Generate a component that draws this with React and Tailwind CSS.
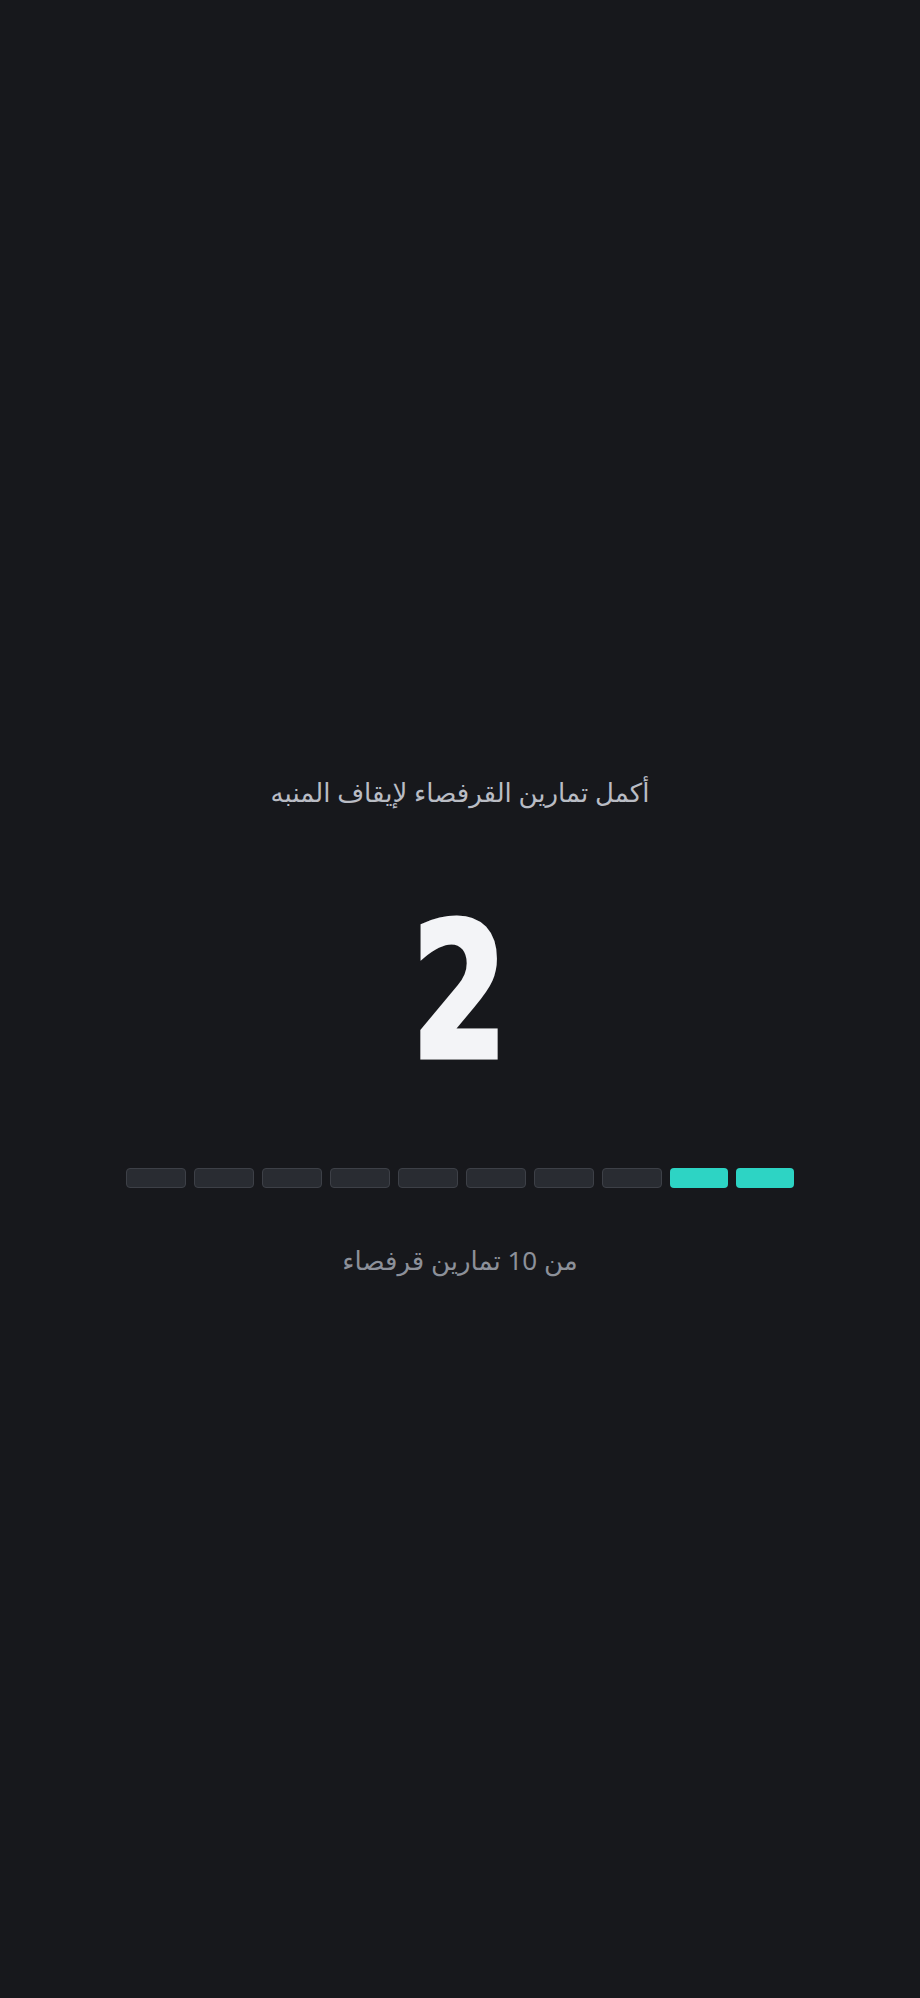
import React from 'react'

const total = 10
const done = 2

export default function App() {
  return (
    <div
      dir="rtl"
      className="min-h-[1998px] w-full bg-[#17181c] flex flex-col items-center pt-[772px]"
      style={{ fontFamily: '"Noto Sans", "DejaVu Sans", sans-serif' }}
    >
      <h1 className="text-[26px] leading-[40px] text-[#b9bcc4]">أكمل تمارين القرفصاء لإيقاف المنبه</h1>

      <div
        dir="ltr"
        className="mt-[85px] h-[190px] flex items-center justify-center text-[187px] leading-none font-bold text-[#f3f4f7] scale-x-[0.82] [-webkit-text-stroke:5px_#f3f4f7]"
        style={{ fontFamily: '"DejaVu Sans Condensed", "DejaVu Sans", sans-serif' }}
      >
        2
      </div>

      <div dir="ltr" className="mt-[81px] w-[668px] flex gap-2">
        {Array.from({ length: total }).map((_, i) => (
          <div
            key={i}
            className={
              i >= total - done
                ? 'flex-1 h-5 rounded-[4px] bg-[#2dd4c4]'
                : 'flex-1 h-5 rounded-[4px] bg-[#292c32] border border-[#3d4047]'
            }
          />
        ))}
      </div>

      <p className="mt-[52px] text-[26px] leading-[40px] text-[#8c9099]">من 10 تمارين قرفصاء</p>
    </div>
  )
}
